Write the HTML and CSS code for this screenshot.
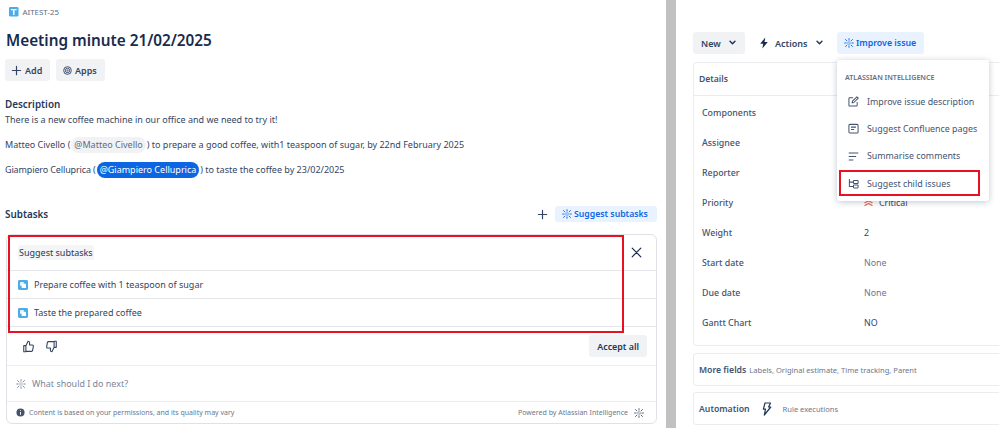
FILE: index.html
```html
<!DOCTYPE html>
<html lang="en">
<head>
<meta charset="utf-8">
<title>AITEST-25</title>
<link rel="stylesheet" href="styles.css">
</head>
<body>
<svg width="0" height="0" class="defs">
  <symbol id="ai" viewBox="0 0 12 12">
    <g fill="none" stroke="currentColor" stroke-width="1.100" stroke-linecap="round">
      <path d="M6 .8v1.800M6 9.400v1.800M.8 6h1.800M9.400 6h1.800M1.800 1.800l1.700 1.700M8.500 8.500l1.700 1.700M10.200 1.800 8.500 3.500M3.500 8.500l-1.700 1.700"/>
    </g>
    <g fill="currentColor"><rect x="5.300" y="4.100" width="1.400" height="1.100"/><rect x="5.300" y="6.800" width="1.400" height="1.100"/><rect x="4" y="5.400" width="1.100" height="1.200"/><rect x="6.900" y="5.400" width="1.100" height="1.200"/></g>
  </symbol>
  <symbol id="sub" viewBox="0 0 10 10">
    <rect width="10" height="10" rx="1.400" fill="#4bade8"/>
    <rect x="2" y="2" width="3.800" height="3.800" rx=".5" fill="#fff" opacity=".85"/>
    <rect x="3.600" y="3.800" width="4.400" height="4.200" rx=".5" fill="#fff"/>
  </symbol>
  <symbol id="chev" viewBox="0 0 8 6">
    <path d="M1.200 1.500 4 4.300l2.800-2.800" fill="none" stroke="currentColor" stroke-width="1.700" stroke-linecap="round" stroke-linejoin="round"/>
  </symbol>
</svg>
<div class="page">
  <main class="left">
    <div class="key">
      <svg class="key-icon" viewBox="0 0 10 10" aria-hidden="true"><rect width="10" height="10" rx="1.300" fill="#4bade8"/><path d="M2 2h6v1.500H5.800V8.400H4.200V3.500H2z" fill="#fff"/></svg>
      <span>AITEST-25</span>
    </div>
    <h1 class="title">Meeting minute 21/02/2025</h1>
    <div class="actions">
      <button class="btn add"><svg class="ic12" viewBox="0 0 12 12"><path d="M6 1.500v9M1.500 6h9" stroke="#344563" stroke-width="1.300" stroke-linecap="round"/></svg>Add</button>
      <button class="btn apps"><svg class="ic12" viewBox="0 0 12 12"><g fill="none" stroke="#344563"><circle cx="6" cy="6" r="4.200" stroke-width="1"/><circle cx="6" cy="6" r="2.400" stroke-width="1"/><circle cx="6" cy="6" r=".7" stroke-width=".8"/></g></svg>Apps</button>
    </div>
    <section class="description">
      <h2 class="h-desc">Description</h2>
      <p class="p-first">There is a new coffee machine in our office and we need to try it!</p>
      <p class="p-row">Matteo Civello (<span class="mention">@Matteo Civello</span>) to prepare a good coffee, with1 teaspoon of sugar, by 22nd February 2025</p>
      <p class="p-row"><span class="name">Giampiero Celluprica (</span><span class="mention self">@Giampiero Celluprica</span>) to taste the coffee by 23/02/2025</p>
    </section>
    <div class="sub-head">
      <h2 class="h-sub">Subtasks</h2>
      <div class="sub-tools">
        <svg class="ic12" viewBox="0 0 12 12"><path d="M6 1.500v9M1.500 6h9" stroke="#344563" stroke-width="1.300" stroke-linecap="round"/></svg>
        <button class="suggest"><svg class="ic-ai"><use href="#ai"/></svg>Suggest subtasks</button>
      </div>
    </div>
    <section class="panel">
      <div class="panel-top">
        <span class="tag">Suggest subtasks</span>
        <svg class="close" viewBox="0 0 12 12"><path d="M1.300 1.300l9.400 9.400M10.700 1.300l-9.400 9.400" stroke="#172b4d" stroke-width="1.300" stroke-linecap="round"/></svg>
      </div>
      <div class="task"><svg class="ic-sub"><use href="#sub"/></svg>Prepare coffee with 1 teaspoon of sugar</div>
      <div class="task"><svg class="ic-sub"><use href="#sub"/></svg>Taste the prepared coffee</div>
      <div class="feedback">
        <div class="thumbs">
          <svg class="thumb" viewBox="0 0 12 12"><path d="M3.600 5.200h-2v5.600h2zM3.600 5.400 5.600 1.200c.9 0 1.400.6 1.400 1.400v2h2.600c.6 0 1 .5.9 1.100l-.7 3.900c-.1.5-.5.9-1 .9H3.600" fill="none" stroke="#344563" stroke-width="1" stroke-linejoin="round"/></svg>
          <svg class="thumb" viewBox="0 0 12 12"><path d="M8.400 6.800h2V1.200h-2zM8.400 6.600l-2 4.200c-.9 0-1.400-.6-1.400-1.400v-2H2.400c-.6 0-1-.5-.9-1.100l.7-3.900c.1-.5.5-.9 1-.9h5.200" fill="none" stroke="#344563" stroke-width="1" stroke-linejoin="round"/></svg>
        </div>
        <button class="accept">Accept all</button>
      </div>
      <div class="ask"><svg class="ic-ai grey"><use href="#ai"/></svg>What should I do next?</div>
      <div class="panel-foot">
        <span class="foot-left"><svg class="ic-info" viewBox="0 0 10 10"><circle cx="5" cy="5" r="4.500" fill="#44546f"/><path d="M5 4.500v3M5 2.400v1" stroke="#fff" stroke-width="1"/></svg>Content is based on your permissions, and its quality may vary</span>
        <span class="foot-right">Powered by Atlassian Intelligence<svg class="ic-ai dark"><use href="#ai"/></svg></span>
      </div>
    </section>
    <div class="mark mark-panel"></div>
  </main>
  <div class="gutter"></div>
  <aside class="right">
    <div class="top-btns">
      <button class="btn new">New<svg class="chev"><use href="#chev"/></svg></button>
      <button class="btn plain"><svg class="bolt" viewBox="0 0 10 12"><path d="M6.300.4 1.200 6.800h3L3.300 11.600 8.800 4.900H5.500z" fill="#172b4d"/></svg>Actions<svg class="chev"><use href="#chev"/></svg></button>
      <button class="suggest improve"><svg class="ic-ai"><use href="#ai"/></svg>Improve issue</button>
    </div>
    <section class="card details">
      <div class="card-head">Details</div>
      <dl class="fields">
        <div class="field"><dt>Components</dt><dd></dd></div>
        <div class="field"><dt>Assignee</dt><dd></dd></div>
        <div class="field"><dt>Reporter</dt><dd></dd></div>
        <div class="field"><dt>Priority</dt><dd class="prio"><svg class="ic-prio" viewBox="0 0 10 8"><path d="M1 3.800 5 1.500l4 2.300M1 6.800 5 4.500l4 2.300" fill="none" stroke="#e5694a" stroke-width="1.200" stroke-linecap="round"/></svg>Critical</dd></div>
        <div class="field"><dt>Weight</dt><dd>2</dd></div>
        <div class="field"><dt>Start date</dt><dd class="none">None</dd></div>
        <div class="field"><dt>Due date</dt><dd class="none">None</dd></div>
        <div class="field"><dt>Gantt Chart</dt><dd>NO</dd></div>
      </dl>
    </section>
    <section class="card row-card">
      <strong>More fields</strong><span class="hint">Labels, Original estimate, Time tracking, Parent</span>
    </section>
    <section class="card row-card">
      <strong>Automation</strong>
      <svg class="auto-bolt" viewBox="0 0 10 14"><path d="M3 1h5.500L6.600 5h2.200L2.300 13l1.200-5.800H1.400z" fill="none" stroke="#253858" stroke-width="1.200" stroke-linejoin="round"/></svg>
      <span class="hint">Rule executions</span>
    </section>
    <div class="menu">
      <div class="menu-title">ATLASSIAN INTELLIGENCE</div>
      <div class="menu-item"><svg class="ic-menu" viewBox="0 0 12 12"><path d="M10 6.500V10a1 1 0 0 1-1 1H2a1 1 0 0 1-1-1V3a1 1 0 0 1 1-1h3.500M4.500 7.500l.4-1.900L9.700.9l1.500 1.500-4.800 4.700z" fill="none" stroke="#44546f" stroke-width="1.100" stroke-linejoin="round"/></svg>Improve issue description</div>
      <div class="menu-item"><svg class="ic-menu" viewBox="0 0 12 12"><rect x="1" y="1.500" width="10" height="9.500" rx="1.200" fill="none" stroke="#44546f" stroke-width="1.100"/><path d="M3.300 4.500h5.400M3.300 7h3.400" stroke="#44546f" stroke-width="1.100"/></svg>Suggest Confluence pages</div>
      <div class="menu-item"><svg class="ic-menu" viewBox="0 0 12 12"><path d="M.8 2.200h10.400M.8 6h8M.8 9.800h5" stroke="#44546f" stroke-width="1.100"/></svg>Summarise comments</div>
      <div class="menu-item"><svg class="ic-menu" viewBox="0 0 12 12"><path d="M1.500 1v8.300h4M1.500 4.500h4" fill="none" stroke="#44546f" stroke-width="1.100"/><rect x="6" y="2.800" width="5" height="3.200" rx=".6" fill="none" stroke="#44546f" stroke-width="1.100"/><rect x="6" y="7.600" width="5" height="3.200" rx=".6" fill="none" stroke="#44546f" stroke-width="1.100"/></svg>Suggest child issues</div>
      <div class="mark mark-menu"></div>
    </div>
  </aside>
</div>
</body>
</html>
```
FILE: styles.css
```css
* { box-sizing: border-box; }
html, body { margin: 0; height: 100%; overflow: hidden; background: #fff; }
body { font-family: "Noto Sans", "Open Sans", sans-serif; font-size: 9px; color: #344563; }
button { font: inherit; border: 0; cursor: pointer; }
h1, h2, p, dl, dd { margin: 0; }
.defs { position: absolute; }
.page { display: flex; height: 428px; }

.left { position: relative; width: 666px; flex: none; padding: 0 9px 0 5px; }
.gutter { width: 10px; flex: none; background: #c1c1c1; }
.right { position: relative; flex: 1; min-width: 0; padding: 32px 0 0 17px; overflow: hidden; }

.key { display: flex; align-items: center; gap: 4px; height: 16px; margin: 4px 0 0 4px; font-size: 7.900px; color: #5e6c84; }
.key-icon { width: 9.500px; height: 9.500px; }
.title { margin: 8px 0 0 1px; font-size: 15.300px; line-height: 24px; font-weight: 600; color: #172b4d; }
.actions { display: flex; gap: 6px; margin-top: 7px; }
.btn { display: flex; align-items: center; height: 22px; border-radius: 3px; background: #f1f2f4; color: #344563; font-size: 9px; font-weight: 600; }
.add { width: 45px; padding-left: 6px; gap: 3px; }
.apps { width: 49px; padding-left: 5.500px; gap: 2.500px; }
.ic12 { width: 11px; height: 11px; flex: none; }

.description { margin-top: 15px; }
.h-desc { font-size: 9.900px; line-height: 16px; font-weight: 600; color: #253858; }
.p-first { line-height: 16px; font-size: 9px; }
.p-row { margin-top: 9px; line-height: 16px; font-size: 9px; }
.name { letter-spacing: -.13px; }
.mention { display: inline-block; margin: 0 1px; padding: 0 3px; border-radius: 8px; background: #f1f2f4; color: #5e6c84; }
.mention.self { background: #0c66e4; color: #fff; }

.sub-head { display: flex; align-items: center; justify-content: space-between; height: 16px; margin-top: 28px; }
.h-sub { font-size: 9.900px; font-weight: 600; color: #253858; }
.sub-tools { display: flex; align-items: center; gap: 7px; }
.suggest { display: inline-flex; align-items: center; gap: 2px; height: 16px; padding: 0 0 0 7px; width: 102px; white-space: nowrap; border-radius: 3px; background: #e9f2ff; color: #0c66e4; font-size: 8.700px; font-weight: 600; }
.ic-ai { width: 10px; height: 10px; flex: none; }
.ic-ai.grey { color: #7a869a; }
.ic-ai.dark { color: #44546f; }

.panel { margin: 12px 0 0 1px; height: 190px; border: 1.500px solid #dfe1e6; border-radius: 6px; display: flex; flex-direction: column; }
.panel-top { height: 36px; flex: none; display: flex; align-items: center; justify-content: space-between; padding: 0 14px 0 11px; border-bottom: 1px solid #e4e6ea; }
.tag { padding: 1px 1px; background: #f4f5f7; border-radius: 2px; font-size: 9px; color: #253858; }
.close { width: 11px; height: 11px; }
.task { height: 28px; flex: none; display: flex; align-items: center; gap: 6px; padding-left: 11px; border-bottom: 1px solid #e4e6ea; font-size: 9px; color: #344563; }
.ic-sub { width: 10px; height: 10px; flex: none; }
.feedback { height: 39px; flex: none; display: flex; align-items: center; justify-content: space-between; padding: 0 9px 0 15px; border-bottom: 1.500px solid #ebecf0; }
.thumbs { display: flex; gap: 10px; }
.thumb { width: 13px; height: 13px; }
.accept { height: 22px; padding: 0 8px; border-radius: 3px; background: #f1f2f4; color: #253858; font-size: 8.900px; font-weight: 600; }
.ask { height: 36px; flex: none; display: flex; align-items: center; gap: 6px; padding-left: 9px; border-bottom: 1px solid #ebecf0; color: #7a869a; font-size: 8.950px; }
.panel-foot { flex: 1; display: flex; align-items: center; justify-content: space-between; padding: 0 12px 0 9px; font-size: 7px; color: #6b778c; }
.foot-left, .foot-right { display: flex; align-items: center; gap: 4px; }
.foot-right { gap: 6px; }
.ic-info { width: 9px; height: 9px; flex: none; }

.mark { position: absolute; border: 2px solid #e8111f; pointer-events: none; }
.mark-panel { left: 8px; top: 235px; width: 616px; height: 98px; }
.mark-menu { left: 2px; right: 9px; top: 110px; height: 26px; }

.top-btns { display: flex; gap: 12px; }
.btn.new { gap: 8px; padding: 0 8px; width: 52px; }
.btn.plain { gap: 6px; padding: 0 2px; background: none; width: 73px; }
.btn.plain .chev { margin-left: 2px; }
.chev { width: 7px; height: 5.250px; color: #253858; }
.bolt { width: 10px; height: 12px; }
.improve { height: 22px; width: 87px; gap: 2px; padding: 0 0 0 7px; margin-left: -5px; font-size: 8.800px; }

.card { width: 330px; border: 1.500px solid #ebecf0; border-radius: 3px; }
.details { margin-top: 8px; height: 284px; }
.card-head { height: 33px; display: flex; align-items: center; padding-left: 5px; font-size: 8.600px; font-weight: 600; color: #44546f; border-bottom: 1px solid #ebecf0; }
.fields { padding: 2px 0 0 8px; }
.field { display: flex; align-items: center; height: 30px; font-size: 8.850px; }
dt { width: 162px; flex: none; font-weight: 500; color: #44546f; }
dd { color: #344563; }
dd.none { color: #6b778c; }
.prio { display: flex; align-items: center; gap: 6px; }
.ic-prio { width: 9px; height: 8px; }

.row-card { display: flex; align-items: center; height: 33px; margin-top: 6.500px; padding: 1px 0 0 5px; }
.row-card strong { font-size: 8.700px; font-weight: 600; color: #44546f; }
.hint { margin-left: 3px; font-size: 7.550px; color: #6b778c; }
.auto-bolt { width: 10px; height: 14px; margin: 0 8px 0 12px; }

.menu { position: absolute; left: 161px; top: 60px; width: 152px; height: 141px; padding-top: 9px; background: #fff; border-radius: 3px; box-shadow: 0 1px 6px rgba(9, 30, 66, .25); }
.menu-title { height: 19px; line-height: 16px; padding-left: 8px; font-size: 7.100px; font-weight: 600; color: #626f86; }
.menu-item { display: flex; align-items: center; gap: 8px; height: 27.300px; padding-left: 11px; font-size: 8.850px; color: #44546f; }
.ic-menu { width: 11px; height: 11px; flex: none; }
```
